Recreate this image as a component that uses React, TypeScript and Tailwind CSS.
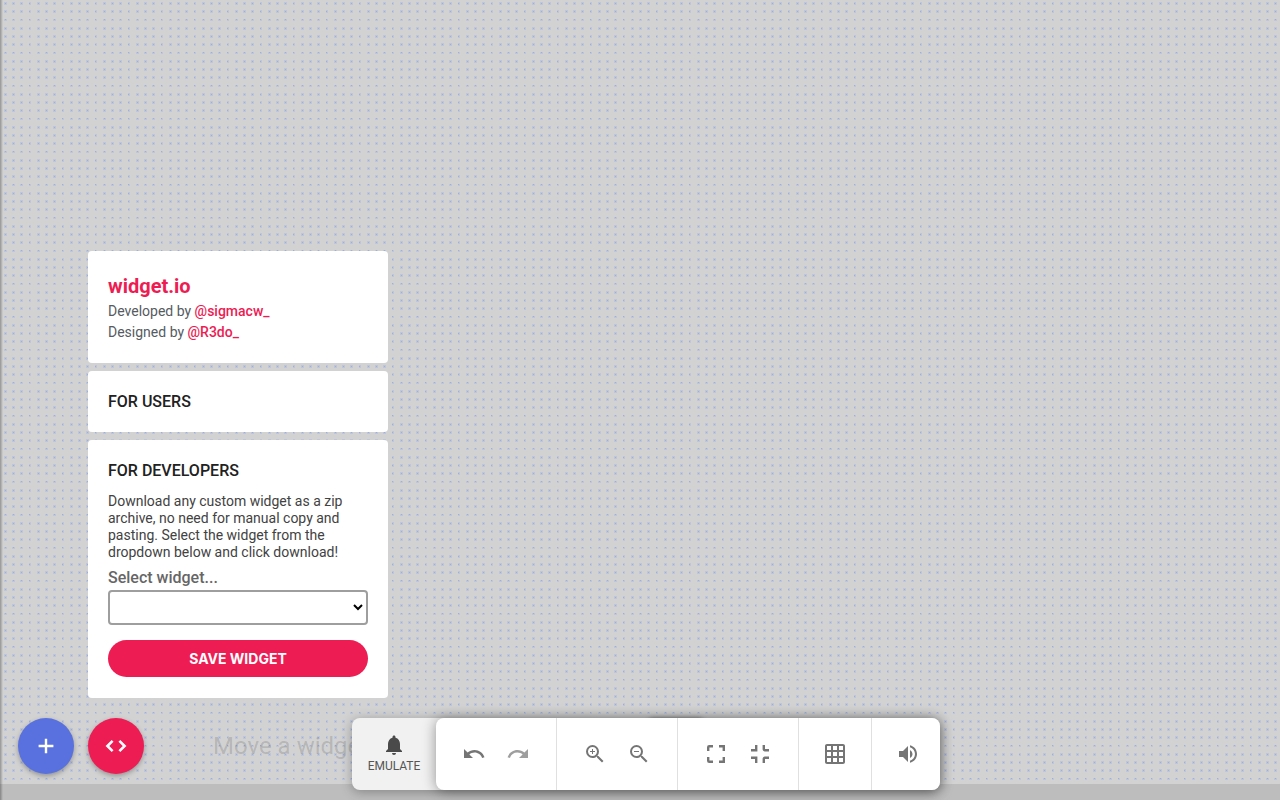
import type { ReactNode } from "react";
import { MdGridOn, MdNotifications, MdRedo, MdUndo, MdVolumeUp, MdZoomIn, MdZoomOut } from "react-icons/md";

// dots inside one 33px tile, four per side
const COLUMNS = [
    { x: 4, width: 3 },
    { x: 12, width: 3 },
    { x: 20, width: 3 },
    { x: 29, width: 2 },
];
const ROWS = [
    { y: 2, height: 3 },
    { y: 10, height: 3 },
    { y: 19, height: 2 },
    { y: 27, height: 3 },
];

function DotGrid() {
    return (
        <svg className="h-full w-full" aria-hidden="true">
            <defs>
                <pattern id="dots" width="33" height="33" patternUnits="userSpaceOnUse">
                    {ROWS.map(({ y, height }) =>
                        COLUMNS.map(({ x, width }) => (
                            <g key={`${x}-${y}`}>
                                <rect x={x} y={y} width={width} height={height} fill="#bfc6d9" />
                                <rect x={x + width - 2} y={y + height - 2} width="1" height="1" fill="#9fb0d8" />
                            </g>
                        ))
                    )}
                </pattern>
            </defs>
            <rect width="100%" height="100%" fill="url(#dots)" />
        </svg>
    );
}

function PlusIcon() {
    return (
        <svg className="h-6 w-6" viewBox="0 0 24 24" fill="none" stroke="currentColor" strokeWidth="2.4">
            <path d="M12 4.8v14.4M4.6 12h14.8" />
        </svg>
    );
}

function CodeIcon() {
    return (
        <svg className="h-6 w-6" viewBox="0 0 24 24" fill="none" stroke="currentColor" strokeWidth="2.6">
            <path d="M8.6 6.8 3.4 12l5.2 5.2M15.4 6.8l5.2 5.2-5.2 5.2" />
        </svg>
    );
}

function ExpandIcon() {
    return (
        <svg className="h-6 w-6" viewBox="0 0 24 24" fill="none" stroke="currentColor" strokeWidth="2.4">
            <path d="M4.2 9V5.2a1 1 0 0 1 1-1H9M15 4.2h4.8V9M4.2 15v3.8a1 1 0 0 0 1 1H9M15 19.8h4.8V15" />
        </svg>
    );
}

function CollapseIcon() {
    return (
        <svg className="h-6 w-6" viewBox="0 0 24 24" fill="none" stroke="currentColor" strokeWidth="2.4">
            <path d="M8.2 3v5.2H3M15.8 3v4.2a1 1 0 0 0 1 1H21M8.2 21v-5.2H3M15.8 21v-4.2a1 1 0 0 1 1-1H21" />
        </svg>
    );
}

function Card({ children }: { children: ReactNode }) {
    return <section className="rounded bg-white p-5">{children}</section>;
}

function ToolButton({ label, children, disabled }: { label: string; children: ReactNode; disabled?: boolean }) {
    return (
        <button type="button" aria-label={label} disabled={disabled} className="text-[#757575] disabled:text-[#9e9e9e]">
            {children}
        </button>
    );
}

function InfoPanel() {
    return (
        <div className="flex w-[300px] flex-col gap-2">
            <Card>
                <h1 className="text-xl leading-[30px] font-bold text-[#ed1c53]">widget.io</h1>
                <p className="text-sm leading-[21px] text-[#555b5f]">
                    Developed by <a href="#sigmacw" className="font-medium text-[#ed1c53]">@sigmacw_</a>
                </p>
                <p className="text-sm leading-[21px] text-[#555b5f]">
                    Designed by <a href="#r3do" className="font-medium text-[#ed1c53]">@R3do_</a>
                </p>
            </Card>

            <Card>
                <h2 className="text-base leading-[21px] font-medium text-[#212121]">FOR USERS</h2>
            </Card>

            <Card>
                <div className="flex flex-col pb-px">
                    <h2 className="text-base leading-[21px] font-medium text-[#212121]">FOR DEVELOPERS</h2>
                    <p className="mt-3 text-sm leading-[17px] text-[#424242]">
                        Download any custom widget as a zip archive, no need for manual copy and pasting. Select the widget from the dropdown below and click download!
                    </p>
                    <label htmlFor="widget" className="mt-1.5 mb-0.5 text-base leading-[21px] font-medium text-[#666]">
                        Select widget...
                    </label>
                    <select id="widget" className="h-[35px] w-full rounded border-2 border-[#9e9e9e] bg-white text-sm text-black" />
                    <button type="button" className="mt-[15px] h-[37px] w-full rounded-full bg-[#ed1c53] font-[Inter,sans-serif] text-sm font-bold text-white">
                        SAVE WIDGET
                    </button>
                </div>
            </Card>
        </div>
    );
}

function Toolbar() {
    return (
        <div className="relative">
            <div className="absolute top-0 left-[294px] h-8 w-[60px] rounded-lg shadow-[0_0_4px_rgba(0,0,0,0.4)]" />
            <div className="relative flex h-[72px] rounded-lg bg-[#f1f1f1] shadow-[0_2px_12px_rgba(0,0,0,0.3)]">
                <button type="button" className="flex w-[84px] flex-col items-center gap-px pt-[15px] text-[#4a4a4a]">
                    <MdNotifications className="h-6 w-6" />
                    <span className="text-xs leading-4 text-[#555]">EMULATE</span>
                </button>
                <div className="flex divide-x divide-[#e0e0e0] rounded-lg bg-white shadow-[0_1px_14px_rgba(0,0,0,0.4)]">
                    <div className="flex items-center gap-5 px-[26px]">
                        <ToolButton label="Undo"><MdUndo className="h-6 w-6" /></ToolButton>
                        <ToolButton label="Redo" disabled><MdRedo className="h-6 w-6" /></ToolButton>
                    </div>
                    <div className="flex items-center gap-5 px-[26px]">
                        <ToolButton label="Zoom in"><MdZoomIn className="h-6 w-6" /></ToolButton>
                        <ToolButton label="Zoom out"><MdZoomOut className="h-6 w-6" /></ToolButton>
                    </div>
                    <div className="flex items-center gap-5 px-[26px]">
                        <ToolButton label="Expand"><ExpandIcon /></ToolButton>
                        <ToolButton label="Collapse"><CollapseIcon /></ToolButton>
                    </div>
                    <div className="flex items-center px-6">
                        <ToolButton label="Grid"><MdGridOn className="h-6 w-6" /></ToolButton>
                    </div>
                    <div className="flex items-center pr-5 pl-6">
                        <ToolButton label="Sound"><MdVolumeUp className="h-6 w-6" /></ToolButton>
                    </div>
                </div>
            </div>
        </div>
    );
}

export default function App() {
    return (
        <div className="relative flex h-screen flex-col overflow-hidden bg-[#bdbdbd] font-[Roboto,sans-serif]">
            <main className="min-h-0 flex-1 bg-[#d2d2d2]">
                <DotGrid />
            </main>
            <footer className="h-4" />
            <div className="absolute inset-y-0 left-0 w-[3px] bg-gradient-to-r from-black/30 to-transparent" />

            <p className="absolute bottom-[38px] left-[213px] text-2xl leading-8 text-black/15">Move a widget</p>

            <div className="absolute bottom-[26px] left-[18px] flex items-end gap-[14px]">
                <button type="button" aria-label="Add widget" className="flex h-14 w-14 items-center justify-center rounded-full bg-[#5871de] text-white shadow-[0_2px_5px_rgba(0,0,0,0.3)]">
                    <PlusIcon />
                </button>
                <div className="flex flex-col gap-5">
                    <InfoPanel />
                    <button type="button" aria-label="Developer menu" className="flex h-14 w-14 items-center justify-center rounded-full bg-[#ed1c53] text-white shadow-[0_2px_5px_rgba(0,0,0,0.3)]">
                        <CodeIcon />
                    </button>
                </div>
            </div>

            <div className="absolute bottom-[10px] left-[352px]">
                <Toolbar />
            </div>
        </div>
    );
}
